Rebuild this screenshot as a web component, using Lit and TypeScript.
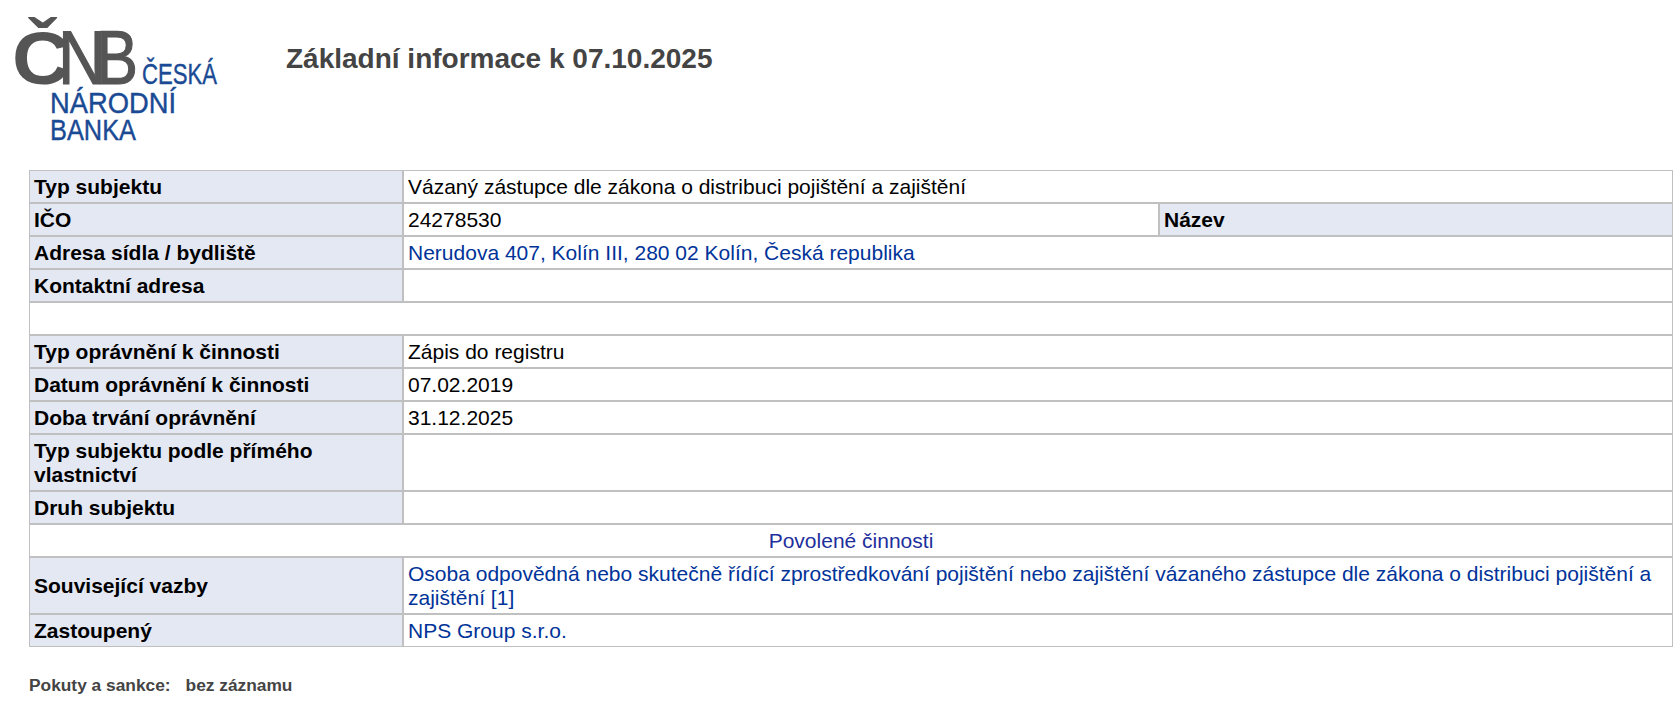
import { LitElement, html, css } from "lit";
import { customElement } from "lit/decorators.js";

@customElement("app-root")
export class AppRoot extends LitElement {
  static styles = css`
    :host { display: block; background: #fff; font-family: "Liberation Sans", Arial, sans-serif; color: #000; overflow: hidden; }
    .head { display: flex; align-items: flex-start; height: 170px; }
    .logo { display: block; flex: none; width: 286px; height: 170px; }
    .logo .cnb { font-family: "Liberation Sans", sans-serif; font-size: 76px; fill: #555; }
    .logo .heavy { font-size: 74px; font-weight: 700; }
    .logo .mid { stroke: #555; stroke-width: 1.2px; }
    .logo .name { font-family: "Liberation Sans", sans-serif; font-size: 29px; fill: #1a4a94; stroke: #1a4a94; stroke-width: 0.4px; }
    h1 { margin: 43px 0 0; font-size: 28px; line-height: 32px; font-weight: 700; color: #444; }
    table { margin-left: 29px; width: 1644px; table-layout: fixed; border-collapse: separate; border-spacing: 0; font-size: 21px; line-height: 24px; }
    td { border: 1px solid #c0c0c0; padding: 4px 4px 3px; box-sizing: content-box; vertical-align: middle; height: 24px; }
    .k { background: #e4e8f3; font-weight: 700; }
    .link { color: #003399; }
    .center { text-align: center; color: #1d2f9c; }
    .foot { margin: 28px 0 0 29px; font-size: 17.33px; line-height: 20px; font-weight: 700; color: #444; display: flex; gap: 15px; }
  `;

  render() {
    return html`
      <div class="head">
        <svg class="logo" viewBox="0 0 286 170" role="img" aria-label="ČNB Česká národní banka">
          <text class="cnb heavy" x="12" y="84" textLength="58" lengthAdjust="spacingAndGlyphs">Č</text>
          <text class="cnb mid" x="58" y="84" textLength="48" lengthAdjust="spacingAndGlyphs">N</text>
          <text class="cnb mid" x="96" y="84" textLength="42" lengthAdjust="spacingAndGlyphs">B</text>
          <text class="name" x="142" y="84" textLength="75" lengthAdjust="spacingAndGlyphs">ČESKÁ</text>
          <text class="name" x="50" y="113" textLength="126" lengthAdjust="spacingAndGlyphs">NÁRODNÍ</text>
          <text class="name" x="50" y="140" textLength="86" lengthAdjust="spacingAndGlyphs">BANKA</text>
        </svg>
        <h1>Základní informace k 07.10.2025</h1>
      </div>
      <table>
        <colgroup><col style="width:374px" /><col style="width:756px" /><col /></colgroup>
        <tr><td class="k">Typ subjektu</td><td colspan="2">Vázaný zástupce dle zákona o distribuci pojištění a zajištění</td></tr>
        <tr><td class="k">IČO</td><td>24278530</td><td class="k">Název</td></tr>
        <tr><td class="k">Adresa sídla / bydliště</td><td colspan="2" class="link">Nerudova 407, Kolín III, 280 02 Kolín, Česká republika</td></tr>
        <tr><td class="k">Kontaktní adresa</td><td colspan="2"></td></tr>
        <tr><td colspan="3"></td></tr>
        <tr><td class="k">Typ oprávnění k činnosti</td><td colspan="2">Zápis do registru</td></tr>
        <tr><td class="k">Datum oprávnění k činnosti</td><td colspan="2">07.02.2019</td></tr>
        <tr><td class="k">Doba trvání oprávnění</td><td colspan="2">31.12.2025</td></tr>
        <tr><td class="k">Typ subjektu podle přímého vlastnictví</td><td colspan="2"></td></tr>
        <tr><td class="k">Druh subjektu</td><td colspan="2"></td></tr>
        <tr><td colspan="3" class="center">Povolené činnosti</td></tr>
        <tr><td class="k">Související vazby</td><td colspan="2" class="link">Osoba odpovědná nebo skutečně řídící zprostředkování pojištění nebo zajištění vázaného zástupce dle zákona o distribuci pojištění a zajištění [1]</td></tr>
        <tr><td class="k">Zastoupený</td><td colspan="2" class="link">NPS Group s.r.o.</td></tr>
      </table>
      <div class="foot"><span>Pokuty a sankce:</span><span>bez záznamu</span></div>
    `;
  }
}
